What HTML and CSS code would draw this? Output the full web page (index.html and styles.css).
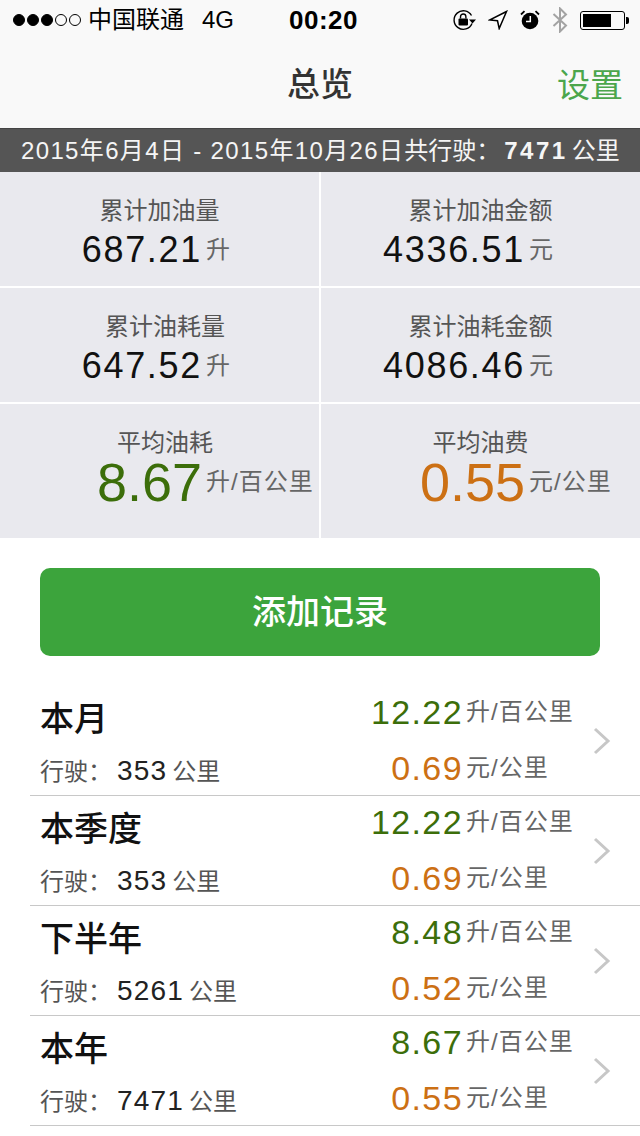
FILE: index.html

```html
<!DOCTYPE html>
<html lang="zh-CN">
<head>
    <meta charset="UTF-8">
    <meta name="viewport" content="width=device-width, initial-scale=1.0">
    <title>总览</title>
    <link rel="stylesheet" href="styles.css">
</head>
<body>
    <header class="topbar">
        <div class="status-bar">
            <div class="status-left">
                <span class="signal">
                    <i class="dot on"></i><i class="dot on"></i><i class="dot on"></i><i class="dot"></i><i class="dot"></i>
                </span>
                <span class="carrier">中国联通</span>
                <span class="network">4G</span>
            </div>
            <div class="clock">00:20</div>
            <div class="status-right">
                <svg width="24" height="22" viewBox="0 0 24 22">
                    <path d="M20 14.500A9.300 9.300 0 1 1 19.500 6.500" fill="none" stroke="#000" stroke-width="1.4"/>
                    <path d="M17 10.500h7l-3.500 4z" fill="#000"/>
                    <rect x="6.500" y="9.500" width="9.500" height="7" rx="1" fill="#000"/>
                    <path d="M8.500 9.500V7.700a2.700 2.700 0 0 1 5.400 0v1.800" fill="none" stroke="#000" stroke-width="1.400"/>
                </svg>
                <svg width="20" height="20" viewBox="0 0 20 20">
                    <path d="M18.500 1.500 1.500 10l8 .8 1.700 7.700z" fill="#fff" stroke="#000" stroke-width="1.500" stroke-linejoin="miter"/>
                </svg>
                <svg width="20" height="20" viewBox="0 0 20 20">
                    <circle cx="10" cy="11" r="8.300" fill="#000"/>
                    <path d="M10.300 6v5.500H6" fill="none" stroke="#fff" stroke-width="1.500"/>
                    <path d="M1 4.500 4.500 1.200M19 4.500 15.500 1.200" fill="none" stroke="#000" stroke-width="1.800"/>
                </svg>
                <svg width="16" height="26" viewBox="0 0 16 26">
                    <path d="M1.500 7 14 18.500 8 24.500V1.500l6 6L1.500 19" fill="none" stroke="#a3a3a3" stroke-width="2"/>
                </svg>
                <div class="battery"><div class="battery-body"><div class="battery-level" style="width: 73%"></div></div><div class="battery-cap"></div></div>
            </div>
        </div>
        <nav class="nav-bar">
            <h1>总览</h1>
            <a class="nav-action">设置</a>
        </nav>
    </header>

    <div class="summary">2015年6月4日 - 2015年10月26日<span class="plain">共行驶：</span><b>7471</b><span class="plain">公里</span></div>

    <section class="stats">
        <div class="stat"><div class="stat-label">累计加油量</div><div class="stat-value"><span class="num">687.21</span><span class="unit">升</span></div></div>
        <div class="stat"><div class="stat-label">累计加油金额</div><div class="stat-value"><span class="num">4336.51</span><span class="unit">元</span></div></div>
        <div class="stat"><div class="stat-label nudge">累计油耗量</div><div class="stat-value"><span class="num">647.52</span><span class="unit">升</span></div></div>
        <div class="stat"><div class="stat-label">累计油耗金额</div><div class="stat-value"><span class="num">4086.46</span><span class="unit">元</span></div></div>
        <div class="stat"><div class="stat-label nudge">平均油耗</div><div class="stat-value"><span class="num big green">8.67</span><span class="unit">升/百公里</span></div></div>
        <div class="stat"><div class="stat-label">平均油费</div><div class="stat-value"><span class="num big orange">0.55</span><span class="unit">元/公里</span></div></div>
    </section>

    <div class="action"><button type="button" class="add-btn">添加记录</button></div>

    <ul class="records">
        <li class="record">
            <div class="record-left"><div class="record-title">本月</div><div class="record-dist"><span class="dist-label">行驶：</span><span class="dist-num">353</span>公里</div></div>
            <div class="record-right">
                <span class="rate green">12.22</span><span class="rate-unit">升/百公里</span>
                <span class="rate orange">0.69</span><span class="rate-unit">元/公里</span>
            </div>
            <svg class="chevron" width="18" height="28" viewBox="0 0 18 28"><path d="M2 2l13 12L2 26" fill="none" stroke="#c7c7c7" stroke-width="3"/></svg>
        </li>
        <li class="record">
            <div class="record-left"><div class="record-title">本季度</div><div class="record-dist"><span class="dist-label">行驶：</span><span class="dist-num">353</span>公里</div></div>
            <div class="record-right">
                <span class="rate green">12.22</span><span class="rate-unit">升/百公里</span>
                <span class="rate orange">0.69</span><span class="rate-unit">元/公里</span>
            </div>
            <svg class="chevron" width="18" height="28" viewBox="0 0 18 28"><path d="M2 2l13 12L2 26" fill="none" stroke="#c7c7c7" stroke-width="3"/></svg>
        </li>
        <li class="record">
            <div class="record-left"><div class="record-title">下半年</div><div class="record-dist"><span class="dist-label">行驶：</span><span class="dist-num">5261</span>公里</div></div>
            <div class="record-right">
                <span class="rate green">8.48</span><span class="rate-unit">升/百公里</span>
                <span class="rate orange">0.52</span><span class="rate-unit">元/公里</span>
            </div>
            <svg class="chevron" width="18" height="28" viewBox="0 0 18 28"><path d="M2 2l13 12L2 26" fill="none" stroke="#c7c7c7" stroke-width="3"/></svg>
        </li>
        <li class="record">
            <div class="record-left"><div class="record-title">本年</div><div class="record-dist"><span class="dist-label">行驶：</span><span class="dist-num">7471</span>公里</div></div>
            <div class="record-right">
                <span class="rate green">8.67</span><span class="rate-unit">升/百公里</span>
                <span class="rate orange">0.55</span><span class="rate-unit">元/公里</span>
            </div>
            <svg class="chevron" width="18" height="28" viewBox="0 0 18 28"><path d="M2 2l13 12L2 26" fill="none" stroke="#c7c7c7" stroke-width="3"/></svg>
        </li>
    </ul>
</body>
</html>
```

FILE: styles.css

```css
* {
    box-sizing: border-box;
}
html, body {
    margin: 0;
    padding: 0;
}
body {
    width: 640px;
    height: 1136px;
    overflow: hidden;
    background: #fff;
    font-family: "Liberation Sans", "Noto Sans CJK SC", sans-serif;
    color: #555;
}

/* top */
.topbar {
    background: #f9f9f9;
    height: 128px;
}
.status-bar {
    height: 40px;
    display: grid;
    grid-template-columns: 1fr auto 1fr;
    align-items: center;
    padding: 0 11px 0 13px;
    color: #000;
}
.status-left {
    display: flex;
    align-items: center;
    font-size: 24px;
    line-height: 40px;
}
.signal {
    display: flex;
    gap: 2px;
    margin-right: 7px;
}
.dot {
    width: 12px;
    height: 12px;
    border-radius: 50%;
    border: 1px solid #000;
}
.dot.on {
    background: #000;
}
.network {
    margin-left: 18px;
}
.clock {
    font-size: 26px;
    font-weight: bold;
    letter-spacing: 0.5px;
    margin-left: 5px;
}
.status-right {
    display: flex;
    align-items: center;
    justify-content: flex-end;
    gap: 12px;
}
.battery {
    display: flex;
    align-items: center;
}
.battery-body {
    width: 45px;
    height: 19px;
    border: 1px solid #000;
    border-radius: 3px;
    padding: 2px;
}
.battery-level {
    height: 100%;
    background: #000;
}
.battery-cap {
    width: 3px;
    height: 7px;
    background: #000;
    border-radius: 0 2px 2px 0;
    margin-left: 1px;
}
.nav-bar {
    height: 88px;
    position: relative;
    display: flex;
    align-items: center;
    justify-content: center;
    padding-bottom: 4px;
}
.nav-bar h1 {
    margin: 0;
    font-size: 33px;
    font-weight: 500;
    color: #333;
}
.nav-action {
    position: absolute;
    right: 17px;
    top: 19px;
    font-size: 33px;
    color: #4ca64c;
}

.summary {
    height: 44px;
    background: #555;
    border-top: 1px solid #444;
    color: #f5f5f5;
    font-size: 24px;
    line-height: 43px;
    padding-left: 21px;
    letter-spacing: 1.35px;
    white-space: nowrap;
}
.summary .plain {
    letter-spacing: 0;
}
.summary b {
    margin: 0 4px 0 4px;
    letter-spacing: 2.5px;
}

/* stats */
.stats {
    display: grid;
    grid-template-columns: 1fr 1fr;
    gap: 2px;
    height: 366px;
    grid-template-rows: 114px 114px 134px;
}
.stat {
    background: #e9e9ee;
    text-align: center;
    padding-top: 24px;
}
.stat-label {
    font-size: 24px;
    line-height: 30px;
    color: #555;
}
.stat-label.nudge {
    padding-left: 11px;
}
.stat-value {
    display: grid;
    grid-template-columns: 202px 1fr;
    align-items: center;
    height: 48px;
    line-height: 48px;
    text-align: left;
}
.stat:nth-child(even) .stat-value {
    grid-template-columns: 204px 1fr;
}
.num {
    font-size: 36px;
    color: #111;
    letter-spacing: 1.7px;
    text-align: right;
}
.num.big {
    font-size: 54px;
    letter-spacing: 0;
}
.num.green {
    color: #3c6e0a;
}
.num.orange {
    color: #cc7014;
}
.unit {
    font-size: 24px;
    color: #666;
    margin-left: 4px;
    letter-spacing: 1px;
    white-space: nowrap;
}

.action {
    padding: 30px 40px;
}
.add-btn {
    display: block;
    width: 100%;
    height: 88px;
    border: none;
    border-radius: 10px;
    background: #3ca43c;
    color: #fff;
    font-family: inherit;
    font-size: 34px;
    font-weight: 500;
    padding: 0 0 6px;
}

/* records */
.records {
    list-style: none;
    margin: 0 0 0 30px;
    padding: 0;
}
.record {
    height: 110px;
    border-bottom: 1px solid #c8c8c8;
    display: flex;
    position: relative;
}
.record-left {
    padding-left: 10px;
    flex: 1;
}
.record-title {
    font-size: 34px;
    font-weight: 500;
    color: #111;
    line-height: 50px;
    margin-top: 8px;
}
.record-dist {
    font-size: 24px;
    color: #555;
    margin-top: 10px;
    line-height: 34px;
}
.dist-label {
    display: inline-block;
    width: 77px;
}
.dist-num {
    font-size: 28px;
    color: #222;
    letter-spacing: 1.2px;
    margin-right: 5px;
}
.record-right {
    display: grid;
    grid-template-columns: 1fr 114px;
    grid-template-rows: 40px 40px;
    row-gap: 16px;
    align-items: center;
    width: 230px;
    margin-right: 63px;
    padding-top: 6px;
    align-self: start;
}
.rate {
    font-size: 34px;
    letter-spacing: 1.4px;
    text-align: right;
    line-height: 40px;
}
.rate.green {
    color: #3c6e0a;
}
.rate.orange {
    color: #cc7014;
}
.rate-unit {
    font-size: 24px;
    color: #666;
    margin-left: 3px;
    letter-spacing: 1px;
    white-space: nowrap;
    line-height: 42px;
}
.chevron {
    position: absolute;
    right: 0;
    top: 41px;
    margin-right: 29px;
}
```
